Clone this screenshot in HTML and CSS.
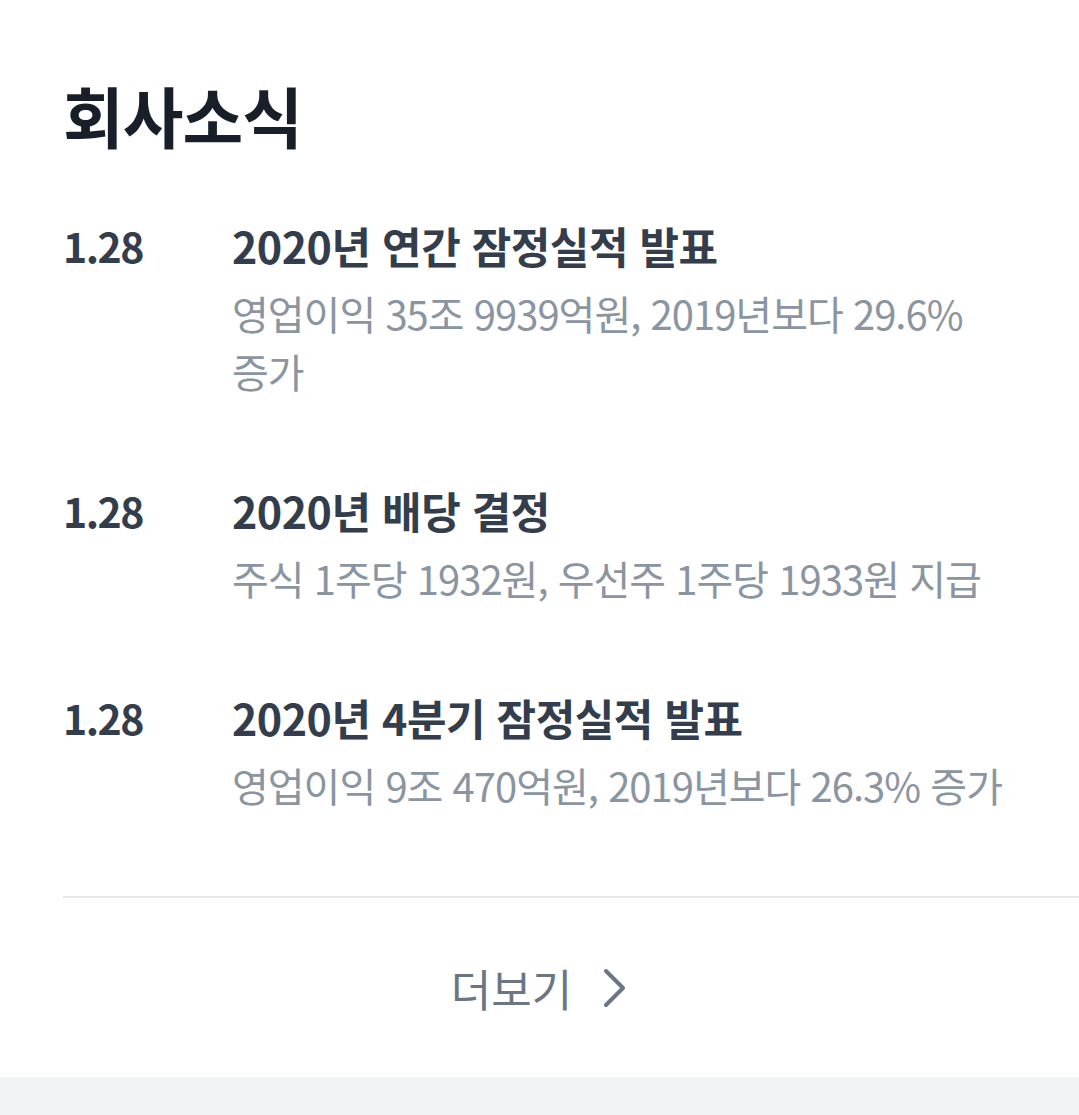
FILE: index.html
```html
<!DOCTYPE html>
<html lang="ko">
<head>
    <meta charset="utf-8">
    <title>회사소식</title>
    <link rel="stylesheet" href="styles.css">
</head>
<body>
    <div class="news">
        <h2 class="news-title">회사소식</h2>
        <ul class="news-list">
            <li class="news-item">
                <div class="news-date">1.28</div>
                <div class="news-body">
                    <div class="news-head">2020년 연간 잠정실적 발표</div>
                    <div class="news-desc">영업이익 35조 9939억원, 2019년보다 29.6% 증가</div>
                </div>
            </li>
            <li class="news-item">
                <div class="news-date">1.28</div>
                <div class="news-body">
                    <div class="news-head">2020년 배당 결정</div>
                    <div class="news-desc">주식 1주당 1932원, 우선주 1주당 1933원 지급</div>
                </div>
            </li>
            <li class="news-item">
                <div class="news-date">1.28</div>
                <div class="news-body">
                    <div class="news-head">2020년 4분기 잠정실적 발표</div>
                    <div class="news-desc">영업이익 9조 470억원, 2019년보다 26.3% 증가</div>
                </div>
            </li>
        </ul>
        <div class="divider"></div>
        <a class="more" href="#">
            <span>더보기</span>
            <svg class="chevron" width="26" height="40" viewBox="0 0 26 40">
                <polyline points="4,3 21,20 4,37" fill="none" stroke="#6b7684" stroke-width="4" stroke-linecap="round" stroke-linejoin="round"/>
            </svg>
        </a>
    </div>
    <div class="gap"></div>
</body>
</html>
```

FILE: styles.css
```css
body {
    margin: 0;
    background: #fff;
    font-family: "Noto Sans CJK KR", "Noto Sans", sans-serif;
}
.news {
    padding-top: 72px;
}
.news-title {
    margin: 0 0 20px;
    padding-left: 63px;
    font-size: 66px;
    line-height: 84px;
    font-weight: 700;
    letter-spacing: -1px;
    color: #191f28;
}
.news-list {
    list-style: none;
    margin: 0;
    padding: 0 63px 41px;
}
.news-item {
    display: grid;
    grid-template-columns: 169px 1fr;
    padding: 39px 0 41px;
}
.news-date {
    font-size: 41px;
    line-height: 60px;
    font-weight: 600;
    letter-spacing: -1.5px;
    color: #333d4b;
}
.news-head {
    font-size: 43px;
    line-height: 60px;
    font-weight: 600;
    letter-spacing: -0.5px;
    color: #333d4b;
    margin-bottom: 9px;
}
.news-desc {
    font-size: 40px;
    line-height: 58px;
    letter-spacing: -1px;
    word-break: keep-all;
    color: #8b95a1;
}
.divider {
    margin-left: 63px;
    height: 2px;
    background: #e5e8eb;
}
.more {
    display: flex;
    align-items: center;
    justify-content: center;
    gap: 30px;
    height: 179px;
    font-size: 44px;
    color: #6b7684;
    text-decoration: none;
}
.gap {
    height: 40px;
    background: #f2f3f5;
}
```
